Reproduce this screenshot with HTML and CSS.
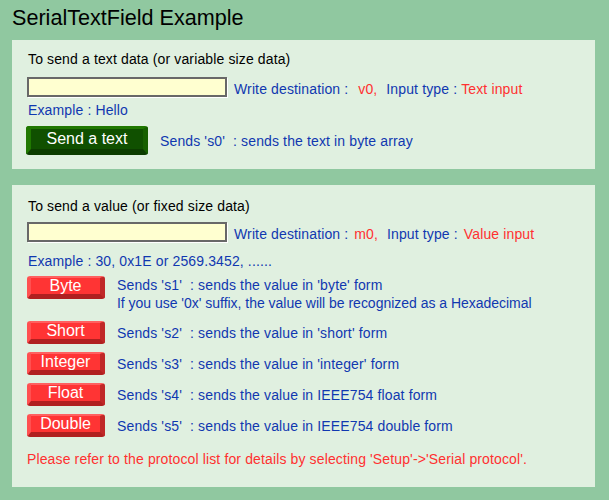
FILE: index.html
```html
<!DOCTYPE html>
<html>
<head>
<meta charset="utf-8">
<link rel="stylesheet" href="styles.css">
</head>
<body>
<h1 class="title">SerialTextField Example</h1>

<section class="panel panel-text">
  <div class="heading">To send a text data (or variable size data)</div>
  <div class="input-row">
    <div class="field"></div>
    <span class="blue wd">Write destination :</span>
    <span class="red dest-v">v0,</span>
    <span class="blue it">Input type :</span>
    <span class="red typ">Text input</span>
  </div>
  <div class="example blue ex1">Example : Hello</div>
  <div class="btn-row">
    <div class="btn btn-green">Send a text</div>
    <span class="blue desc">Sends 's0'&nbsp; : sends the text in byte array</span>
  </div>
</section>

<section class="panel panel-value">
  <div class="heading">To send a value (or fixed size data)</div>
  <div class="input-row">
    <div class="field"></div>
    <span class="blue wd">Write destination :</span>
    <span class="red dest-m">m0,</span>
    <span class="blue it">Input type :</span>
    <span class="red typ2">Value input</span>
  </div>
  <div class="example blue ex2">Example : 30, 0x1E or 2569.3452, ......</div>
  <div class="list">
    <div class="vrow top">
      <div class="btn btn-red">Byte</div>
      <div class="blue desc2">Sends 's1'&nbsp; : sends the value in 'byte' form<br><span class="tight">If you use '0x' suffix, the value will be recognized as a Hexadecimal</span></div>
    </div>
    <div class="vrow">
      <div class="btn btn-red">Short</div>
      <div class="blue desc2">Sends 's2'&nbsp; : sends the value in 'short' form</div>
    </div>
    <div class="vrow">
      <div class="btn btn-red">Integer</div>
      <div class="blue desc2">Sends 's3'&nbsp; : sends the value in 'integer' form</div>
    </div>
    <div class="vrow">
      <div class="btn btn-red">Float</div>
      <div class="blue desc2">Sends 's4'&nbsp; : sends the value in IEEE754 float form</div>
    </div>
    <div class="vrow">
      <div class="btn btn-red">Double</div>
      <div class="blue desc2">Sends 's5'&nbsp; : sends the value in IEEE754 double form</div>
    </div>
  </div>
  <div class="note red">Please refer to the protocol list for details by selecting 'Setup'-&gt;'Serial protocol'.</div>
</section>
</body>
</html>
```

FILE: styles.css
```css
html, body {
  margin: 0;
  padding: 0;
}
body {
  background: #90c8a0;
  width: 609px;
  height: 500px;
  font-family: "Liberation Sans", Arial, sans-serif;
  font-size: 14px;
  line-height: 16px;
  letter-spacing: 0.13px;
  color: #000;
  -webkit-font-smoothing: none;
}
.title {
  margin: 0;
  padding: 5px 0 0 12px;
  height: 40px;
  box-sizing: border-box;
  font-size: 21.6px;
  line-height: 26px;
  letter-spacing: 0;
  font-weight: normal;
  color: #000;
}
.panel {
  background: #e0f0e0;
  margin: 0 14px 0 12px;
  padding-left: 15px;
  display: flex;
  flex-direction: column;
  align-items: flex-start;
}
.panel-text {
  padding-top: 11px;
  padding-bottom: 14px;
}
.panel-value {
  margin-top: 16px;
  padding-top: 13px;
  padding-bottom: 20px;
}
.heading {
  margin-left: 1px;
  height: 16px;
}
.blue { color: #1038b0; }
.red { color: #ff3030; }
.input-row {
  display: flex;
  align-items: center;
  height: 20px;
  white-space: nowrap;
}
.panel-text .input-row { margin-top: 10px; }
.panel-value .input-row { margin-top: 8px; }
.field {
  width: 200px;
  height: 20px;
  box-sizing: border-box;
  background: #ffffd0;
  border: 2px solid #686868;
  box-shadow: 1px 1px 0 #ffffff;
}
.input-row span { position: relative; top: 2px; }
.wd { margin-left: 7px; }
.dest-v { margin-left: 10px; }
.dest-m { margin-left: 6px; }
.it { margin-left: 9px; }
.typ { margin-left: 4px; }
.typ2 { margin-left: 6px; }
.example {
  margin-left: 1px;
  height: 16px;
}
.ex1 { margin-top: 5px; }
.ex2 { margin-top: 11px; }
.btn-row {
  display: flex;
  align-items: center;
  margin-top: 8px;
}
.btn {
  box-sizing: border-box;
  color: #fff;
  font-size: 16px;
  line-height: 18px;
  letter-spacing: 0;
  text-align: center;
  border-radius: 3px;
}
.btn-green {
  width: 122px;
  height: 29px;
  margin-left: -1px;
  background: #105000;
  border-top: 3px solid #207800;
  border-left: 5px solid #207800;
  border-right: 5px solid #175f00;
  border-bottom: 6px solid #0c3c00;
  padding-top: 1px;
}
.desc {
  margin-left: 12px;
}
.list {
  display: flex;
  flex-direction: column;
  gap: 8px;
  margin-top: 7px;
}
.vrow {
  display: flex;
  align-items: center;
}
.vrow.top {
  align-items: flex-start;
  margin-bottom: 1px;
}
.btn-red {
  width: 78px;
  height: 23px;
  background: #ff3434;
  border-top: 2px solid #ff6060;
  border-left: 4px solid #ff5050;
  border-right: 5px solid #c02828;
  border-bottom: 5px solid #b02020;
  line-height: 16px;
}
.desc2 {
  margin-left: 12px;
  line-height: 18px;
}
.tight { letter-spacing: -0.02px; }
.note {
  margin-top: 14px;
  height: 16px;
  white-space: nowrap;
}
```
